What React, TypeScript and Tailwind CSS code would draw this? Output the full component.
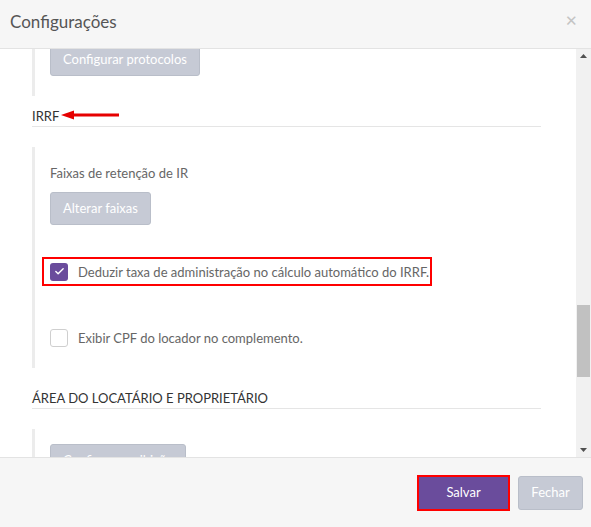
import { Check } from "lucide-react";

function Checkbox({ checked }: { checked?: boolean }) {
  return checked ? (
    <span className="flex h-[18px] w-[18px] shrink-0 items-center justify-center rounded-[3px] bg-[#6a4c9c]">
      <Check size={11} strokeWidth={3} className="text-white" />
    </span>
  ) : (
    <span className="h-[18px] w-[18px] shrink-0 rounded-[3px] border border-[#cfcfcf] bg-white" />
  );
}

function GrayButton({ label }: { label: string }) {
  return (
    <button className="h-[33px] rounded-[3px] border border-[#b9bec9] bg-[#c6cad5] px-[12px] text-[13px] text-white">
      {label}
    </button>
  );
}

export default function App() {
  return (
    <div className="flex h-[527px] w-[591px] flex-col bg-white font-['Lato',sans-serif]">
      {/* cabeçalho */}
      <div className="flex h-[49px] shrink-0 items-center justify-between border-b border-[#e3e3e3] bg-[#f6f6f6] pl-[10px] pr-[13px]">
        <span className="-mt-[4px] text-[17px] text-[#555]">Configurações</span>
        <span className="-mt-[8px] text-[15px] text-[#c4c4c4]">✕</span>
      </div>

      {/* corpo rolável */}
      <div className="flex min-h-0 flex-1">
        <div className="flex-1 overflow-hidden pl-[32px] pr-[35px]">
          <div className="-mt-[6px] border-l-[3px] border-[#ececec] pb-[20px] pl-[15px]">
            <GrayButton label="Configurar protocolos" />
          </div>

          <div className="mt-[10px] flex h-[21px] items-center border-b border-[#e5e5e5]">
            <span className="text-[13px] leading-[20px] text-[#333]">IRRF</span>
            <svg width="60" height="10" viewBox="0 0 60 10" className="-mt-[3px] ml-[1px]">
              <path d="M12 5 H59" stroke="#e60000" strokeWidth="3" />
              <path d="M1 5 L14 0.5 L14 9.5 Z" fill="#e60000" />
            </svg>
          </div>

          <div className="mt-[20px] border-l-[3px] border-[#ececec] pb-[21px] pl-[15px] pt-[16px]">
            <p className="text-[13px] leading-[20px] text-[#666]">Faixas de retenção de IR</p>
            <div className="mt-[9px] flex">
              <GrayButton label="Alterar faixas" />
            </div>
            <div className="ml-[-8px] mt-[32px] flex h-[29px] w-[390px] items-center gap-[10px] border-2 border-[#f00] pl-[6px]">
              <Checkbox checked />
              <span className="text-[13px] leading-[20px] text-[#666]">
                Deduzir taxa de administração no cálculo automático do IRRF.
              </span>
            </div>
            <div className="mt-[43px] flex h-[18px] items-center gap-[10px]">
              <Checkbox />
              <span className="text-[13px] leading-[20px] text-[#666]">
                Exibir CPF do locador no complemento.
              </span>
            </div>
          </div>

          <div className="mt-[20px] flex h-[21px] items-center border-b border-[#e5e5e5]">
            <span className="text-[13px] leading-[20px] text-[#333]">ÁREA DO LOCATÁRIO E PROPRIETÁRIO</span>
          </div>

          <div className="mt-[20px] h-[40px] border-l-[3px] border-[#ececec] pl-[15px] pt-[15px]">
            <GrayButton label="Configurar exibição" />
          </div>
        </div>

        {/* barra de rolagem */}
        <div className="flex w-[15px] shrink-0 flex-col items-center bg-[#f1f1f1]">
          <svg width="9" height="15" viewBox="0 0 9 15" className="shrink-0">
            <path d="M1 9 L4.5 5 L8 9 Z" fill="#505050" />
          </svg>
          <div className="h-[241px] shrink-0" />
          <div className="h-[72px] w-[13px] shrink-0 bg-[#c1c1c1]" />
          <div className="flex-1" />
          <svg width="9" height="15" viewBox="0 0 9 15" className="shrink-0">
            <path d="M1 6 L4.5 10 L8 6 Z" fill="#505050" />
          </svg>
        </div>
      </div>

      {/* rodapé */}
      <div className="flex h-[70px] shrink-0 items-center justify-end gap-[8px] border-t border-[#e3e3e3] bg-[#f6f6f6] pr-[8px]">
        <button className="h-[36px] w-[93px] border-2 border-[#f00] bg-[#6a4c9c] text-[13px] text-white">
          Salvar
        </button>
        <button className="h-[34px] w-[65px] rounded-[3px] border border-[#b9bec9] bg-[#c6cad5] text-[13px] text-white">
          Fechar
        </button>
      </div>
    </div>
  );
}
